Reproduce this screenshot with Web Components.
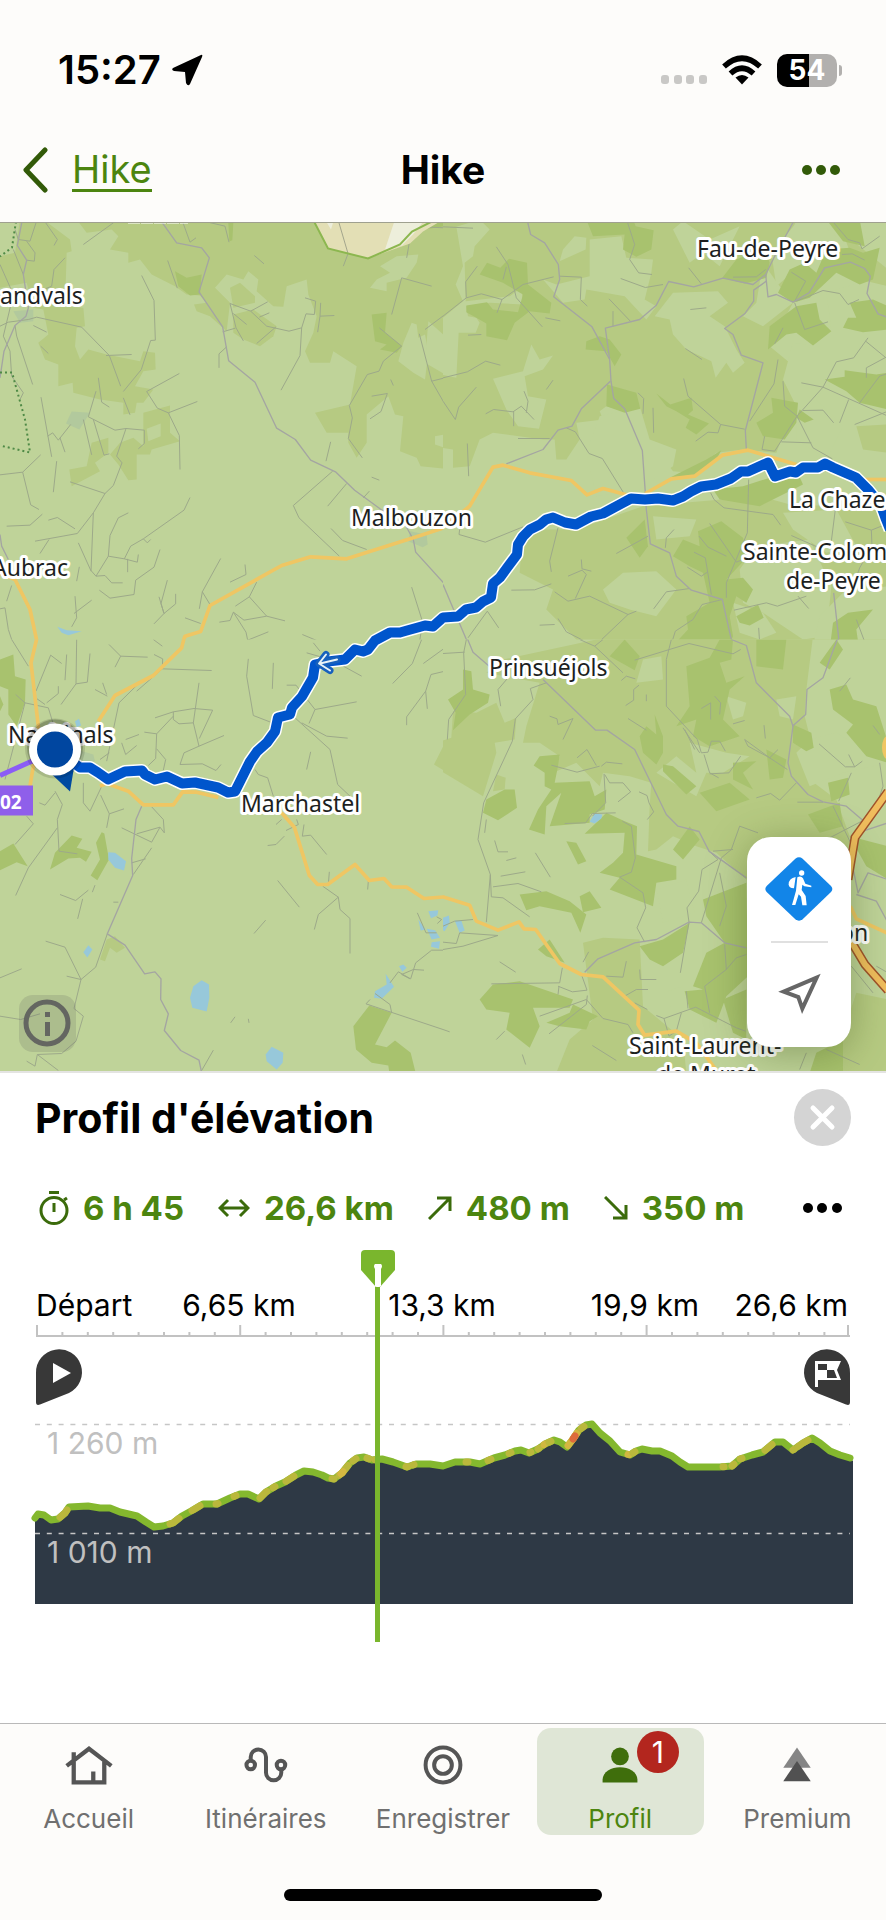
<!DOCTYPE html>
<html lang="fr">
<head>
<meta charset="utf-8">
<meta name="viewport" content="width=device-width, initial-scale=1">
<title>Hike</title>
<style>
  html, body { margin: 0; }
  body {
    min-height: 100vh;
    background: #fff;
    color: #000;
    font-family: Inter, "Liberation Sans", sans-serif;
    --bar: #fdfcfa;
    --line: #b9b9b9;
    --green: #4c850f;
    --dark-green: #3b6b0b;
    --cursor: #7ab62d;
  }
  hike-app { min-height: 100vh; }
</style>
</head>
<body>
<hike-app>
  <status-bar slot="top" time="15:27" battery="54"></status-bar>
  <nav-header slot="top" back="Hike">Hike</nav-header>
  <route-map>
    <map-tools></map-tools>
  </route-map>
  <elevation-panel slot="bottom">
    <span slot="title">Profil d'élévation</span>
    <stat-item icon="time">6 h 45</stat-item>
    <stat-item icon="distance">26,6 km</stat-item>
    <stat-item icon="up">480 m</stat-item>
    <stat-item icon="down">350 m</stat-item>
    <elevation-chart slot="chart" labels="Départ|6,65 km|13,3 km|19,9 km|26,6 km"></elevation-chart>
  </elevation-panel>
  <tab-bar slot="bottom">
    <tab-item icon="home">Accueil</tab-item>
    <tab-item icon="route">Itinéraires</tab-item>
    <tab-item icon="record">Enregistrer</tab-item>
    <tab-item icon="user" active badge="1">Profil</tab-item>
    <tab-item icon="tree">Premium</tab-item>
  </tab-bar>
</hike-app>

<script>
class HikeApp extends HTMLElement {
  connectedCallback() {
    this.attachShadow({ mode: 'open' }).innerHTML = `
      <style>
        :host { display: flex; flex-direction: column; }
        main { flex: 1; display: flex; flex-direction: column; min-height: 500px; }
      </style>
      <slot name="top"></slot>
      <main><slot></slot></main>
      <slot name="bottom"></slot>
    `;
  }
}
customElements.define('hike-app', HikeApp);

class StatusBar extends HTMLElement {
  connectedCallback() {
    const time = this.getAttribute('time');
    const battery = this.getAttribute('battery');
    this.attachShadow({ mode: 'open' }).innerHTML = `
      <style>
        :host {
          display: flex;
          justify-content: space-between;
          align-items: center;
          height: 116px;
          padding: 24px 44px 0 58px;
          box-sizing: border-box;
          background: var(--bar);
        }
        div { display: flex; align-items: center; }
        .time { font-size: 40px; font-weight: 600; line-height: 48px; gap: 11px; }
        .right { gap: 15px; }
        .battery {
          position: relative;
          justify-content: center;
          width: 60px;
          height: 33px;
          border-radius: 10px;
          margin-right: 5px;
          background: linear-gradient(90deg, #000 54%, #b2b0ae 54%);
          color: #fff;
          font-size: 28px;
          font-weight: 700;
        }
        .battery::after {
          content: "";
          position: absolute;
          right: -5px;
          top: 11px;
          width: 3px;
          height: 11px;
          border-radius: 0 3px 3px 0;
          background: #b2b0ae;
        }
      </style>
      <div class="time">${time}
        <svg width="31" height="32" viewBox="0 0 31 32"><path d="M29 1 1 14Q-1 16 2 17L13 18 14 29Q16 33 18 30L30 3Q31 0 29 1Z"/></svg>
      </div>
      <div class="right">
        <svg width="46" height="30" viewBox="0 0 46 30" fill="#c9c8c6">
          <rect y="20" width="8" height="9" rx="3"/><rect x="13" y="20" width="8" height="9" rx="3"/>
          <rect x="25" y="20" width="8" height="9" rx="3"/><rect x="38" y="20" width="8" height="9" rx="3"/>
        </svg>
        <svg width="40" height="30" viewBox="0 0 40 30" fill="none" stroke="#000" stroke-width="5.5">
          <path d="M2 11.500Q20-5 38 11.500M8.500 18.500Q20 8 31.500 18.500"/>
          <path d="M13.500 22.500Q20 17.500 26.500 22.500L20 29.500Z" fill="#000" stroke="none"/>
        </svg>
        <div class="battery">${battery}</div>
      </div>
    `;
  }
}
customElements.define('status-bar', StatusBar);

class NavHeader extends HTMLElement {
  connectedCallback() {
    this.attachShadow({ mode: 'open' }).innerHTML = `
      <style>
        :host {
          display: grid;
          grid-template-columns: 1fr auto 1fr;
          align-items: center;
          height: 107px;
          padding: 2px 44px 0 22px;
          box-sizing: border-box;
          background: var(--bar);
          border-bottom: 1px solid #9fa08f;
          line-height: 48px;
        }
        a {
          display: flex;
          align-items: center;
          gap: 24px;
          color: var(--green);
          font-size: 38px;
          text-decoration: none;
        }
        a span { border-bottom: 3px solid; line-height: 40px; }
        h1 { margin: 0; font-size: 39px; font-weight: 700; padding-left: 22px; }
        button { justify-self: end; padding: 0; border: 0; background: none; display: flex; }
      </style>
      <a href="#"><svg width="26" height="46" viewBox="0 0 26 46"><path d="M23 3 4 23 23 43" fill="none" stroke="#325a08" stroke-width="5" stroke-linecap="round" stroke-linejoin="round"/></svg><span>${this.getAttribute('back')}</span></a>
      <h1><slot></slot></h1>
      <button aria-label="Plus"><svg width="42" height="10" viewBox="0 0 42 10" fill="#325a08"><circle cx="7" cy="5" r="5"/><circle cx="21" cy="5" r="5"/><circle cx="35" cy="5" r="5"/></svg></button>
    `;
  }
}
customElements.define('nav-header', NavHeader);

// Map data. Every tile is 443px wide and holds its shapes at three units per pixel.
const TILES = [
  {
    x: 0, y: 220,
    meadow: [
      '0,110 45,100 60,0 130,0 210,60 215,95 200,100 195,260 250,265 255,320 230,325 225,380 240,420 265,390 320,405 420,425 430,395 465,400 467,450 430,455 405,500 460,510 430,550 410,550 405,580 370,585 370,550 300,540 220,520 218,490 175,500 175,435 135,420 115,370 145,345 130,270 100,265 80,190 0,205',
      '230,0 1335,0 1335,748 1262,740 1250,715 1200,695 1210,590 1185,585 1165,530 1100,585 1100,670 1070,715 1045,670 1045,640 980,640 945,580 1050,555 1070,440 1000,395 990,430 930,430 915,395 940,340 950,290 925,225 920,180 860,200 850,262 820,260 770,215 775,180 745,155 730,180 680,165 645,205 690,250 680,335 630,290 590,275 582,255 620,250 600,228 560,225 525,200 455,165 420,120 385,130 385,100 330,90 355,50 335,30 260,40',
      '690,205 720,190 765,230 765,250 700,265', '700,285 760,270 830,320 820,350 780,380 730,360 700,340',
      '430,580 510,558 510,640 540,665 455,690 450,705 410,705 410,780 385,782 355,735 330,705 360,670 400,655 430,680',
      '275,670 325,655 325,700 285,730 300,755 215,800 208,750 260,740'
    ],
    light: [
      '1140,140 1190,110 1255,105 1250,130 1220,175 1160,190 1160,215 1110,205 1130,180 1170,160',
      '1235,310 1250,315 1255,355 1275,345 1285,400 1275,480 1240,460 1195,425 1210,370',
      '1285,305 1335,350 1335,465 1275,430', '1305,650 1335,645 1335,685 1305,675', '440,628 482,612 482,650 445,665'
    ],
    forest: [
      '525,155 560,175 605,165 600,225 570,228 535,200', '1115,285 1160,280 1155,340 1205,380 1190,400 1140,390 1160,375 1125,365',
      '685,10 700,10 697,62 688,65', '1240,35 1290,0 1335,0 1335,20'
    ],
    village: ['40,275 100,270 100,305 60,310', '215,576 270,580 238,630 198,612', '1230,935 1280,945 1283,975 1268,983 1225,965'],
    water: ['172,1222 200,1232 245,1235 205,1247 185,1240'],
    road: [
      '480,0 530,70 605,85 628,115 597,217 668,322 686,424 765,488 830,626 886,660 932,722 1008,758 1064,812 1140,868 1215,915 1240,960 1247,998 1335,1095',
      '67,0 52,78 80,122 70,165 85,265 78,290 45,318 12,395 0,475', '0,945 5,980 25,1020'
    ],
    track: [
      '40,90 70,165', '108,10 90,65 55,60 45,30', '80,65 105,100 103,125 80,122', '135,7 172,60 162,78', '195,115 162,150 155,200 120,215', '0,135 40,225 10,350 30,395 35,470 70,520 60,540',
      '45,318 50,350 98,495', '0,320 25,308 85,300 110,293 245,323 328,408 362,500', '318,408 395,405', '425,168 462,243 466,362 452,363 424,450 370,516', '100,318 140,338', '340,10 250,75', '548,7 570,68 588,55', '620,7 675,20 687,68', '503,123 532,206', '763,108 792,133',
      '538,462 440,516 472,566 505,580 538,648 540,750', '505,580 592,546', '295,475 305,548 328,563', '288,515 265,592 345,632 378,627 433,632 433,672 415,688', '378,627 350,710 366,730 340,798 315,822 280,880 232,942 105,965', '210,787 315,822', '280,880 273,1055', '123,533 155,712', '143,650 158,640 175,662 212,615', '180,655 195,698', '250,600 275,706', '280,600 312,707 328,703', '370,535 390,586',
      '0,766 68,758 122,706', '68,758 92,856 117,870', '170,725 160,818', '20,920 90,917 127,884', '145,902 172,894 225,928', '120,1002 147,960', '385,880 355,895 330,948 325,1010 288,1070', '570,834 552,872 430,958 392,980 373,1018 325,1010', '430,958 442,970 452,960', '373,1018 412,1028 415,1005', '383,1018 383,1058', '235,970 272,1052 288,1070 315,1068 335,1090 368,1090', '480,990 462,1043 407,1082 402,1125 330,1136 298,1112', '225,1130 230,1195 215,1222', '222,1182 275,1142', '238,1042 230,1085', '20,1145 35,1098', '0,1168 15,1165 25,1230 45,1290', '502,1082 483,1152 492,1182 462,1213', '477,1132 492,1182 527,1153 527,1123', '662,1017 607,1117 598,1168', '607,1117 630,1155', '735,1035 738,1065 690,1088', '770,1088 748,1132 706,1160', '748,1132 800,1190 855,1204', '658,1208 690,1203 700,1178 732,1202 800,1190', '700,1178 738,1238 743,1262 805,1237', '555,1195 602,1212',
      '690,252 752,275 800,320 867,335 905,325 918,283 943,285 947,245 915,235', '690,252 708,325 730,364', '700,282 740,315', '752,275 803,247', '778,293 808,280', '770,372 828,322', '668,337 706,326', '905,325 900,408 843,512', '962,250 960,290 953,338', '960,290 1003,288', '657,445 657,403 680,382', '1012,7 1045,100 1030,140', '1240,0 1220,115', '1295,200 1205,175 1175,285', '1138,325 1205,380 1150,425 1137,455 1102,465 1048,558 1057,595 1045,657 1087,715', '1258,343 1295,485 1335,555', '1275,330 1335,285', '1335,475 1295,485', '1115,530 1162,522 1143,576 1110,598', '1172,480 1180,498', '992,667 978,725', '998,755 880,858 897,895 1018,1010', '1040,792 983,860', '1108,815 1090,835', '1115,773 1138,782', '993,927 1028,963 1100,990', '1235,1103 1268,1208 1255,1290', '907,1245 955,1265 957,1290', '1220,20 1335,25', '122,380 145,402'
    ],
    yellow: ['1335,924 1240,955 1040,1018 932,1012 845,1038 630,1158 602,1236 555,1250 540,1292', '0,1062 45,1080 90,1170 110,1262 98,1310']
  },
  {
    x: 443, y: 220,
    meadow: [
      '-6,-6 1060,0 1040,60 1050,250 980,380 1040,430 1060,540 1000,700 900,690 820,700 740,760 690,755 640,690 600,650 560,580 490,560 470,575 480,600 400,610 410,660 370,720 340,720 335,660 300,660 150,640 110,660 80,740 30,745 30,690 -6,685',
      '235,990 260,930 400,930 600,860 950,830 1060,860 1335,850 1335,1300 440,1300 310,1170 330,1110 230,1060',
      '1240,620 1335,615 1335,700 1260,690', '1200,40 1335,150 1335,200 1250,180'
    ],
    light: [
      '40,22 110,0 140,30 95,80 90,110 65,130 68,245 200,230 235,205 240,255 140,250 70,260 75,290 100,295 110,310 98,340 47,340 40,475 -6,465 -6,350 0,295 60,245 38,195 60,140',
      '360,90 395,50 430,55 428,90 350,125', '440,60 535,50 550,115 630,120 625,160 605,240 640,260 610,300 545,230 430,210 425,240 360,250 300,180 340,195 440,170',
      '690,30 720,5 800,60 890,20 850,100 830,140 780,100 740,130 720,90', '690,220 825,215 855,250 800,290 845,320 880,390 905,430 870,460 850,430 818,475 805,425 730,390 690,345 680,300 635,290',
      '150,478 240,455 265,375 290,420 330,408 300,450 245,470 255,530 310,540 288,628 225,620 190,570',
      '960,130 1010,200 1050,250 960,320 900,290 940,250', '1060,10 1120,0 1190,60 1100,120 1060,150 1000,200 985,100', '1260,0 1335,0 1335,50 1270,60',
      '1150,220 1250,190 1335,200 1335,450 1180,450 1120,540 1200,620 1150,720 1060,660 1060,560 1020,480 1050,370 1110,378 1165,330',
      '480,1110 540,1060 640,1055 700,1110 640,1190 560,1170 500,1150', '890,1050 940,980 1100,960 1165,1100 1150,1250 1080,1260 960,1180 900,1150', '630,890 760,900 740,950 640,960', '870,1150 960,1180 1000,1240 950,1260 890,1240', '1020,880 1180,870 1240,980 1150,1000 1050,930', '470,590 590,560 620,660 700,690 690,740 590,810 460,830 430,700',
      '1105,1300 1130,1190 1200,1120 1335,1100 1335,1300'
    ],
    forest: [
      '430,0 570,0 578,20 632,32 625,90 580,112 540,90 545,45 450,50', '110,165 132,130 172,145 198,118 252,130 255,195 325,250 320,282 260,275 215,310 192,362 130,350 130,312 100,295 70,278 70,258 132,248 150,270 225,278 240,225 180,190',
      '428,390 430,365 470,350 500,360 535,405 515,440 490,395', '492,495 580,520 592,568 545,580 490,560', '640,522 682,555 745,535 750,572 735,585 798,612 760,645 728,625 740,600 700,575 670,560',
      '838,175 880,120 965,85 980,130 970,175 905,192', '1005,220 1040,150 1085,130 1120,160 1150,90 1220,85 1260,100 1310,85 1290,180 1250,195 1180,160 1100,235 1050,250', '975,390 980,320 1060,260 1120,250 1130,300 1165,335 1110,378 1060,340 1030,345',
      '1200,325 1215,295 1240,295 1220,250 1290,240 1335,260 1335,330 1260,338', '940,610 990,580 985,535 1065,550 1060,610 1025,660 960,650', '1145,480 1205,472 1205,452 1300,465 1335,460 1335,570 1250,550 1210,515', '1070,570 1112,600 1085,610 1060,595',
      '1150,0 1250,0 1265,80 1200,65', '680,775 790,720 835,692 820,720 760,765', '810,810 900,800 1060,750 1080,795 950,860 830,840', '765,935 835,905 900,955 915,1010 850,1080 900,1075 930,1110 910,1150 880,1130 860,1190 870,1250 850,1300 670,1300 735,1230 730,1190 800,1150 780,1060 740,1040 690,1010 720,960 770,980', '550,955 605,900 615,980 590,1015', '880,1190 945,1155 962,1195 920,1218 890,1210', '1160,1290 1170,1210 1215,1180 1290,1170 1240,1230 1250,1300'
    ],
    road: [
      '252,0 263,45 305,70 346,135 350,180 332,232 447,322 500,420 504,485 512,536 545,568 598,693 607,820 610,870 622,973 680,1000 700,1070 745,1112 838,1140 866,1265 910,1278 915,1300',
      '502,485 415,568 387,620 345,632 300,690 190,733', '500,420 487,326 590,300 640,257 677,186 752,202 840,176 930,195 968,165 1000,100 1055,0', '968,165 975,232 1000,225 1050,248 1098,220 1145,145 1222,128 1265,147 1282,170 1272,222 1305,283 1335,294', '970,185 932,212 932,245 905,283 845,327 870,345 895,407 960,430 907,633 910,690', '0,1095 85,1295', '1172,1120 1187,1255 1180,1300'
    ],
    track: [
      '0,22 90,26', '160,82 195,135 220,235 298,322', '103,140 68,187 70,235 0,290', '70,235 115,223 177,240 240,195 332,172', '190,142 180,180', '177,240 162,280', '350,170 415,173 412,240 433,260', '553,7 575,75 560,120 587,160 627,165', '533,177 607,204 660,195', '498,238 562,305', '510,275 510,320', '307,295 352,304', '75,347 115,345', '0,475 73,457 128,425 172,437', '100,503 47,563 37,600 0,545', '330,482 310,510', '128,583 152,570 210,577 235,560 273,600', '243,515 255,545 250,580', '212,577 212,620', '225,657 320,657', '73,672 77,770', '370,625 397,637 438,702 478,717 545,825', '585,520 602,537 600,583', '630,565 632,640', '722,477 735,530 833,615 905,629', '833,615 825,640 795,638 758,665', '727,387 777,420', '737,145 775,193', '742,270 790,265', '870,173 940,172 968,150', '1005,420 993,493 920,605', '1020,485 1025,560 1062,590 1110,685 1168,718', '1062,590 1140,503 1180,427 1232,415 1275,355', '1062,590 995,695 957,690 965,650', '1075,490 1140,503 1335,590', '1080,573 1140,572 1172,610', '1015,667 1105,670', '1217,540 1190,610', '1235,615 1335,575', '1268,365 1335,420', '1270,475 1270,445 1335,410', '1250,550 1310,470 1335,462', '1055,250 1085,330 1155,307', '1060,245 1140,213 1190,222 1215,255 1248,240', '1020,325 995,373', '1045,158 1088,185 1055,245', '1170,7 1215,60 1250,70 1257,88 1310,50', '1197,105 1228,103 1265,122',
      '50,930 48,945 127,968 240,922', '345,925 320,1025 325,1057', '415,1020 417,1048 445,1055', '375,1070 417,1052 430,1065 397,1137', '335,1117 375,1145 440,1130 555,1185 455,1280', '205,1112 275,1111 325,1093', '555,1185 580,1175', '290,1217 335,1215', '345,1197 370,1237 455,1280', '133,1175 75,1255', '133,1175 167,1225', '615,950 520,1002', '693,930 670,955 667,985', '803,820 813,840 843,865 990,885 1013,917', '917,780 913,940 850,1090 850,1135', '800,912 880,1028 900,1020', '768,950 795,983 850,1010', '753,998 787,1015 805,1125', '733,1043 775,1070 793,1058', '740,1107 670,1117 632,1168', '873,1172 970,1150 1003,1160 1090,1130', '1065,1130 1097,1167', '838,1140 777,1155 750,1200 697,1235 680,1290', '1177,870 1165,965', '1207,907 1285,932 1320,918', '1285,932 1287,980 1250,1045 1220,1130', '1045,948 1140,990', '947,1225 950,1270', '1240,1200 1270,1280', '660,1290 740,1272 880,1300'
    ],
    yellow: ['0,924 80,860 150,743 180,737 260,760 385,783 432,826 480,807 550,826', '607,822 685,778 755,770 838,707 915,692 1060,735', '1250,780 1335,780']
  },
  {
    x: 0, y: 640,
    meadow: ['1335,310 1302,375 1335,395', '300,960 320,900 345,890 375,925 350,940 330,925 315,965'],
    forest: [
      '0,60 40,45 45,110 77,120 75,190 50,260 25,225 25,150 0,140', '0,170 10,195 0,215', '0,635 40,612 83,680 50,668 0,692', '150,690 165,640 215,588 247,598 230,625 275,637 258,667 240,655 205,657', '305,578 313,582 327,660 292,722 272,708 300,660 288,610',
      '1108,1098 1175,1120 1125,1215 1160,1223 1185,1203 1232,1240 1247,1300 1168,1300 1165,1278 1115,1270 1068,1230 1060,1160'
    ],
    village: ['230,330 280,345 285,365 245,370'],
    water: [
      '325,638 345,640 378,665 372,693 345,685 325,660', '265,917 277,930 262,954 250,938', '605,1022 627,1035 628,1075 620,1116 577,1105 570,1075 580,1040', '815,1222 850,1240 848,1270 830,1290 800,1265 797,1245', '225,245 237,238 243,258 230,263',
      '1125,1055 1160,1035 1157,1003 1182,1042 1145,1078 1122,1075', '1197,980 1210,975 1220,985 1207,997', '1285,815 1315,812 1312,828 1293,836', '1255,840 1277,870 1262,873', '1280,868 1305,872 1320,895 1295,900', '1295,908 1320,905 1317,928 1293,922'
    ],
    road: ['425,500 408,540 395,657 398,708 322,883 375,917 434,1003 465,997 483,1018 482,1080 505,1123 493,1173 542,1233 597,1262 605,1300'],
    track: [
      '35,0 85,80', '230,0 228,133 183,195', '270,42 262,128 228,133', '152,47 108,155', '152,47 185,72', '200,45 195,122', '327,15 362,50 443,53', '362,50 345,83', '460,0 487,20', '462,45 488,58 487,88 410,155', '487,88 635,93', '285,150 322,170', '320,165 308,130', '47,165 75,190 145,205 200,385', '140,190 175,162 175,140', '75,190 15,420', '107,175 135,195', '415,133 357,190 320,365', '465,235 520,217 582,207 638,212 598,297', '597,130 580,250 597,320 672,288', '520,217 520,240 537,253 580,250', '597,320 552,340 540,375 607,373 648,393 663,375', '433,278 470,283 467,357 445,378', '470,283 520,230', '470,328 497,360 490,392', '365,310 377,345 410,318', '377,300 417,285', '328,340 300,360', '820,70 817,148', '745,58 740,110 760,228 830,255', '860,137 888,137 945,210 1070,187', '945,210 927,252', '885,235 990,330 1013,435 1050,470', '905,250 980,290 1043,296', '932,337 920,390', '1030,80 1085,110', '920,40 962,52', '940,10 960,35', '1265,0 1237,72 1178,132', '1335,25 1270,72', '1335,95 1293,105 1277,155 1220,232 1220,257', '1277,155 1282,208', '765,390 775,405 803,415 820,470',
      '250,430 250,490 270,515 310,430', '302,467 328,523 372,508', '328,523 320,565', '165,455 187,495 172,540 177,635 232,643', '172,565 85,685 47,768', '80,530 100,553 45,615', '118,490 135,497 165,460', '455,502 490,540 493,580 480,563 455,608 365,565', '410,583 480,563', '455,625 400,705', '395,670 437,658', '322,883 287,983 243,1020 222,1107 250,1130 228,1205 185,1242 112,1245 175,1293', '243,1020 195,923 137,905', '243,1020 200,1010', '0,1015 65,988', '0,1130 62,1140 120,1123', '80,1265 105,1280 112,1245', '180,765 227,783 265,752', '248,778 233,838', '285,737 277,758', '340,788 355,788', '833,723 898,803', '797,842 762,882', '968,740 1015,773 955,825 943,870', '1015,773 1020,810 1050,837 1050,942', '988,697 985,735', '1105,725 1103,750', '803,618 828,615 853,590', '890,540 895,555 858,573', '912,555 907,590 932,587 980,645', '828,555 845,540', '1252,820 1278,880 1310,880', '1335,932 1295,932 1247,970 1232,1018 1195,997 1170,1030', '1230,1018 1205,1005 1240,990 1272,992', '1110,1080 1098,1093 1335,1172', '1125,1062 1170,1095 1175,1120', '705,1132 692,1150', '745,1138 747,1150', '640,1232 605,1293', '1310,832 1325,840 1312,852'
    ],
    yellow: ['112,-10 93,70 115,260 100,380 90,440', '555,-15 545,25 460,108 345,168 295,245', '300,440 320,432 385,455 430,496 520,496 548,457 590,458 655,474', '845,520 883,563 928,708 953,735 983,735 1065,675 1108,723 1152,717 1175,742 1220,743 1272,777 1335,772']
  },
  {
    x: 443, y: 640,
    meadow: [
      '-5,395 -5,305 25,295 30,215 100,220 160,190 185,250 220,235 215,300 155,310 160,340 120,470',
      '290,130 130,100 180,60 460,0 560,-10 1110,-10 1090,150 1085,230 1110,330 1100,420 1180,480 1220,590 1200,760 910,720 820,640 760,620 690,590 640,630 615,635 620,500 625,430 560,410 480,400 470,440 400,370 330,400 350,350 290,310 240,310 250,260',
      '160,405 188,415 185,450 150,455',
      '420,910 480,895 590,900 600,1100 720,1200 730,1300 340,1300 380,1200 450,1140', '1240,1060 1335,1080 1335,1300 1160,1300'
    ],
    light: [
      '600,60 655,50 660,120 580,130', '640,400 700,350 760,400 740,310 850,340 920,350 840,400 790,400 760,470 690,430', '1000,180 1060,170 1050,240 1010,230', '850,170 910,190 900,230 870,240', '1100,300 1180,280 1335,370 1200,400 1100,440 1060,340', '640,750 730,720 755,820 660,850', '660,1060 720,1040 780,1100 700,1130'
    ],
    forest: [
      '60,90 85,95 90,150 140,165 135,190 80,225 30,272 38,220 15,180 60,150', '185,450 215,450 222,505 165,542 120,520 130,480', '325,450 305,440 305,400 272,378 290,350 350,345 345,380 335,430 440,425 455,470 490,450 485,510 440,525 440,550 320,560 355,460 310,500 305,585 258,570 285,510',
      '490,520 545,545 582,560 580,645 700,680 700,720 640,730 630,800 500,750 530,715 470,700 510,670 540,640 545,580 425,583 470,540', '370,605 400,610 430,665 405,675', '230,765 310,755 380,785 430,825 412,880 385,820 290,800 250,812', '410,770 440,755 475,805 420,818', '110,1080 150,1035 230,1025 390,1080 380,1105 270,1105 290,1160 260,1225 190,1170 200,1120 130,1110', '310,1150 380,1120 390,1095 465,1130 440,1145 430,1170 350,1160', '285,930 320,900 365,970 310,950',
      '500,50 545,0 590,50 575,92', '730,80 800,55 830,0 870,0 865,60 830,70 850,130 905,110 860,150 840,240 890,290 800,320 750,290 760,240 700,260 740,200', '590,290 610,260 640,285 635,225 660,290 660,340 640,375 600,340', '660,375 690,380 760,440 730,465 660,395', '770,460 860,430 920,480 820,515', '690,630 740,560 770,600 720,660', '780,780 910,730 915,1010 850,1070 820,1150 740,1110 725,1055 780,1050 750,1040 790,940 845,910 790,830',
      '1160,150 1210,135 1230,180 1300,200 1335,310 1335,370 1270,350 1210,280 1230,255 1170,210', '1050,255 1105,280 1112,325 1090,335 1050,310', '1155,430 1215,415 1220,465 1165,485', '1095,525 1190,490 1200,560 1130,580', '970,330 1030,360 1020,415 980,420', '870,370 940,365 900,400 930,450 870,420', '940,0 1030,0 1020,90 940,80', '1130,70 1180,0 1200,30 1160,90', '1220,590 1335,620 1335,720 1270,680', '1120,1240 1200,1200 1200,1300 1100,1300', '590,920 660,900 740,850 720,940 660,980 620,960', '840,1080 910,1050 910,1200 870,1180'
    ],
    water: ['455,522 478,525 475,537 455,552 440,547', '35,843 55,843 65,873 50,880', '0,835 18,828 20,850 5,875 -5,870'],
    road: [
      '70,-10 90,38 150,90', '300,120 458,272 492,272 575,330 670,525 705,560 768,576 798,635 910,715', '425,998 465,958 575,910 640,900 738,848 775,850 845,910 910,925', '865,0 910,18 940,130 1040,230 1050,260 1035,370 1045,410 1095,465 1140,487 1210,500 1260,543', '1190,-20 1140,115 1092,150 1088,225 1048,260', '1225,660 1245,760 1275,700 1335,720', '1240,765 1300,785 1335,850', '1260,575 1335,550'
    ],
    track: [
      '0,42 65,38', '70,0 62,40 68,165 17,240 13,300', '195,115 165,150 173,200', '310,130 262,147 270,180 217,238 208,305 122,490 105,600 142,705 130,848', '410,0 455,20 540,100', '455,20 480,0', '575,62 738,12 870,43 893,30', '685,0 670,60 670,200 763,300 775,340 795,338 805,305 830,305 847,335', '535,123 550,110 577,118', '548,198 572,182 572,150 588,137', '610,165 610,185', '555,237 610,272', '320,230 342,238 345,255 390,237 360,300', '402,355 432,330 460,378', '325,377 402,398 470,380', '475,380 490,368 538,373', '483,403 488,490 448,530', '485,405 500,430 540,430 563,457 525,487', '588,457 612,468 618,490 632,517 613,540', '518,520 448,522 428,550 365,552', '538,545 565,560 577,655 565,698 530,713 600,760 608,805 582,865 605,908', '155,603 165,637 195,637', '190,663 220,655', '173,710 247,697', '277,640 322,713', '150,742 225,732 295,757', '142,705 145,772 180,775 260,832', '170,967 218,998', '145,1033 350,1030 358,985', '345,1040 388,1057 432,1052 417,1010', '345,1065 348,1040', '433,1068 430,1095 318,1183', '290,1130 430,1080 480,1137 555,1155 570,1180', '437,937 420,968', '550,965 540,1013 490,1010', '590,990 592,1020 640,1020', '545,1070 580,1050 615,1050', '575,1090 613,1110', '640,1128 663,1137 758,1103 880,1165 908,1175', '715,1120 700,1175 678,1190 663,1137', '735,1107 730,1055', '185,1175 160,1200', '238,1245 248,1275', '448,1218 520,1263', '0,1170 20,1177', '0,908 40,912 50,880 165,888 60,920 0,930', '0,860 35,845 90,840', '738,848 712,1000', '845,915 850,990 785,1040 800,1120', '850,990 880,955 910,945', '775,850 835,655 865,630 890,560 945,580', '798,635 825,660 777,690 767,755 732,805 738,848', '830,700 850,800 830,860', '783,345 800,400 827,415', '800,403 858,400 893,350', '803,240 803,190 775,207', '815,170 833,190 830,225', '870,253 905,243', '963,257 967,297', '905,300 980,355 1033,390', '905,300 915,320 980,355 1005,330', '940,475 983,462 1010,482 1060,430', '1063,488 1140,488', '1128,313 1207,382 1235,382 1217,345', '1235,382 1258,365', '1225,400 1187,485', '1290,258 1310,285', '1222,115 1190,155', '1170,500 1230,625', '1260,543 1160,595', '1310,370 1320,440 1300,500', '1225,980 1290,1060', '1300,980 1335,1000', '1150,1230 1250,1275', '1090,1240 1070,1290', '130,540 125,580', '725,270 755,330', '720,265 770,340', '810,635 870,630'
    ],
    yellow: ['-3,771 80,797 100,845 165,872 228,847 243,868 278,870 350,972 415,1005 480,1012 588,1112 585,1155 605,1187 700,1175 760,1210 825,1300', '1222,800 1240,838 1335,882']
  }
];

const ROUTE = '890,530 886,520 881,506 868,490 856,478 833,468 825,464 818,468 803,468 796,473 790,472 775,477 768,463 748,472 741,472 731,479 716,485 701,487 691,492 683,497 673,501 658,499 645,500 631,499 603,514 591,517 576,525 565,523 553,518 546,520 540,525 530,530 523,537 518,545 517,555 508,567 500,578 493,584 491,598 483,602 476,608 466,610 458,617 443,618 433,627 425,626 407,631 400,633 390,633 375,641 368,650 363,652 355,650 345,660 328,662 315,665 313,678 302,697 292,708 290,715 278,718 275,732 267,743 257,752 250,762 235,792 228,793 218,788 195,783 182,784 167,777 155,780 145,775 142,771 125,772 108,780 98,773 90,768 80,768 55,750';

const PLACES = [
  ['andvals', 0, 304], ['Aubrac', -8, 576], ['Malbouzon', 351, 526], ['Fau-de-Peyre', 697, 257],
  ['La Chaze', 789, 508], ['Sainte-Colom', 743, 560], ['de-Peyre', 786, 589], ['Prinsuéjols', 489, 676],
  ['Nasbinals', 8, 743], ['Marchastel', 241, 812], ['Saint-Laurent-', 629, 1054], ['de Muret', 657, 1083], ['on', 840, 941]
];

class RouteMap extends HTMLElement {
  tile(t) {
    const fill = (list, color) => (list || []).map(p => `<polygon points="${p}" fill="${color}"/>`).join('');
    const line = (list, color, width) => (list || []).map(p => `<polyline points="${p}" stroke="${color}" stroke-width="${width}" fill="none"/>`).join('');
    return `<svg x="${t.x}" y="${t.y}" width="443" height="${t.y === 220 ? 420 : 440}" viewBox="0 0 1329 ${t.y === 220 ? 1260 : 1320}">
      ${fill(t.meadow, '#b6ca82')}${fill(t.light, '#bfd399')}${fill(t.forest, '#a8c26e')}
      ${fill(t.village, '#b2c99d')}${fill(t.water, '#97c8da')}
      ${line(t.track, '#9da98a', 3)}${line(t.road, '#a4a5a2', 4)}${line(t.yellow, '#efc663', 11)}
    </svg>`;
  }

  connectedCallback() {
    const places = PLACES.map(([name, x, y]) => `<text x="${x}" y="${y}">${name}</text>`).join('');
    this.attachShadow({ mode: 'open' }).innerHTML = `
      <style>
        :host {
          display: block;
          position: relative;
          flex: 1;
          overflow: hidden;
          background: #bfd399;
        }
        .map { position: absolute; inset: 0; width: 100%; height: 100%; }
        .map polyline { stroke-linejoin: round; }
        .places text {
          font: 23px "Noto Sans", sans-serif;
          fill: #1d1f1f;
          stroke: #fff;
          stroke-width: 6px;
          stroke-linejoin: round;
          paint-order: stroke;
        }
        .info {
          position: absolute;
          left: 19px;
          bottom: 19px;
          width: 57px;
          height: 57px;
          padding: 0;
          border: 0;
          border-radius: 14px;
          background: rgba(90, 90, 90, .18);
        }
        ::slotted(map-tools) { position: absolute; right: 35px; bottom: 24px; }
      </style>
      <svg class="map" viewBox="0 223 886 849" preserveAspectRatio="xMidYMid slice">
        ${TILES.map(t => this.tile(t)).join('')}
        <path d="M313 220 328 249 368 259 410 244 423 232 440 222Z" fill="#e3dfb5"/>
        <path d="M395 220H425L413 235 402 246 385 250ZM325 220H334L331 230Z" fill="#edeedb"/>
        <path d="M338 220 348 254" stroke="#a3a58c" fill="none"/>
        <path d="M313 220 328 249 368 259 400 245 412 232 432 222" fill="none" stroke="#8cb74f" stroke-width="2"/>
        <path d="M16 222 12 248 0 257M0 373H12L25 420 30 453 0 446" fill="none" stroke="#4f8a46" stroke-width="2" stroke-dasharray="2 3"/>
        <path d="M128 223H188" stroke="#fff" stroke-width="2" stroke-dasharray="12 1"/>
        <path d="M888 792 855 838 848 880M850 940 865 965 888 991" fill="none" stroke="#a0522a" stroke-width="9"/>
        <path d="M888 792 855 838 848 880M850 940 865 965 888 991" fill="none" stroke="#f0bd5d" stroke-width="6"/>
        <ellipse cx="888" cy="748" rx="6" ry="12" fill="#efc663"/>
        <path d="M0 776 40 758" stroke="#8b5cf6" stroke-width="5"/>
        <rect x="-2" y="786" width="35" height="30" fill="#8f5fea"/>
        <text x="0" y="809" font-family="Noto Sans, sans-serif" font-size="19" font-weight="700" fill="#fff">02</text>
        <polyline points="${ROUTE}" fill="none" stroke="#fff" stroke-width="13"/>
        <polyline points="${ROUTE}" fill="none" stroke="#0055cc" stroke-width="10"/>
        <g fill="none" stroke-linecap="round" stroke-linejoin="round">
          <path d="M337 660 320 664M326 655 319 664 330 671" stroke="#1761bd" stroke-width="7"/>
          <path d="M337 660 320 664M326 655 319 664 330 671" stroke="#e9f3f7" stroke-width="2"/>
        </g>
        <g class="places">${places}</g>
        <path d="M52 775 70 792 74 768Z" fill="#004aa0"/>
        <circle cx="55" cy="749" r="30" fill="#000" opacity=".12"/>
        <circle cx="55" cy="748" r="28" fill="#000" opacity=".2"/>
        <circle cx="55" cy="750" r="22" fill="#0046a0" stroke="#fff" stroke-width="8"/>
      </svg>
      <button class="info" aria-label="Informations">
        <svg width="57" height="57" viewBox="0 0 57 57"><circle cx="28" cy="28" r="21" fill="none" stroke="#646661" stroke-width="5"/><path d="M26 17h5v5h-5zM26 27h5v14h-5z" fill="#646661"/></svg>
      </button>
      <slot></slot>
    `;
  }
}
customElements.define('route-map', RouteMap);

class MapTools extends HTMLElement {
  connectedCallback() {
    this.attachShadow({ mode: 'open' }).innerHTML = `
      <style>
        :host {
          display: flex;
          flex-direction: column;
          align-items: center;
          width: 104px;
          height: 210px;
          border-radius: 24px;
          background: #fff;
          box-shadow: 0 6px 40px rgba(60, 80, 20, .4);
        }
        button { flex: 1; width: 100%; padding: 0; border: 0; background: none; display: grid; place-items: center; }
        hr { width: 57px; height: 2px; margin: 0; border: 0; background: #e0e0e0; }
      </style>
      <button aria-label="Activité">
        <svg width="68" height="64" viewBox="966 651 202 192">
          <path d="M1056 656Q1067 648 1078 656L1163 738Q1171 747 1163 756L1078 838Q1067 846 1056 838L970 756Q962 747 970 738Z" fill="#1285e8"/>
          <g fill="#fff"><circle cx="1075" cy="699" r="8"/><path d="M1057 711 1052 745Q1036 745 1036 733 1036 715 1057 711Z"/>
          <path d="M1062 712Q1073 706 1079 715L1086 731 1104 737V742L1083 739 1077 734 1075 750 1087 768 1090 796H1077L1073 770 1066 763 1056 795H1046L1058 752Z"/></g>
        </svg>
      </button>
      <hr>
      <button aria-label="Ma position">
        <svg width="44" height="44" viewBox="1000 1001 132 132"><path d="M1119 1015 1020 1057 1064 1073 1076 1108Z" fill="none" stroke="#666" stroke-width="12"/></svg>
      </button>
    `;
  }
}
customElements.define('map-tools', MapTools);

class ElevationPanel extends HTMLElement {
  connectedCallback() {
    this.attachShadow({ mode: 'open' }).innerHTML = `
      <style>
        :host {
          display: block;
          padding: 16px 35px 119px;
          border-top: 2px solid #e4e4e2;
          background: #fff;
        }
        header, .stats { display: flex; justify-content: space-between; align-items: center; }
        h2 { margin: 0; font-size: 41px; line-height: 56px; font-weight: 700; }
        button { padding: 0; border: 0; background: none; display: flex; }
        .close { border-radius: 50%; background: #d4d4d4; }
        .stats { height: 40px; margin: 42px 9px 22px 4px; gap: 34px; justify-content: flex-start; }
        .stats button { margin-left: auto; }
      </style>
      <header>
        <h2><slot name="title"></slot></h2>
        <button class="close" aria-label="Fermer"><svg width="57" height="57" viewBox="0 0 57 57"><path d="M19 19 38 38M38 19 19 38" stroke="#fff" stroke-width="5" stroke-linecap="round"/></svg></button>
      </header>
      <div class="stats">
        <slot></slot>
        <button aria-label="Plus"><svg width="39" height="10" viewBox="0 0 39 10"><circle cx="5" cy="5" r="5"/><circle cx="19" cy="5" r="5"/><circle cx="34" cy="5" r="5"/></svg></button>
      </div>
      <slot name="chart"></slot>
    `;
  }
}
customElements.define('elevation-panel', ElevationPanel);

const STAT_ICONS = {
  time: '<svg width="30" height="34" viewBox="0 0 30 34"><circle cx="15" cy="19.500" r="13"/><path d="M10 1.500H20M15 12V21M25 9 28 7"/></svg>',
  distance: '<svg width="32" height="20" viewBox="0 0 32 20"><path d="M2 10H30M10 2 2 10 10 18M22 2 30 10 22 18"/></svg>',
  up: '<svg width="24" height="24" viewBox="0 0 24 24"><path d="M1 23 21 3M9 2H22V15"/></svg>',
  down: '<svg width="24" height="24" viewBox="0 0 24 24"><path d="M1 1 21 21M9 22H22V9"/></svg>'
};

class StatItem extends HTMLElement {
  connectedCallback() {
    this.attachShadow({ mode: 'open' }).innerHTML = `
      <style>
        :host {
          display: flex;
          align-items: center;
          gap: 14px;
          color: var(--green);
          font-size: 33px;
          font-weight: 700;
          white-space: nowrap;
        }
        svg { fill: none; stroke: var(--dark-green); stroke-width: 3; }
      </style>
      ${STAT_ICONS[this.getAttribute('icon')]}<slot></slot>
    `;
  }
}
customElements.define('stat-item', StatItem);

const PROFILE = [
  [35,129],[38,125],[44,126],[51,131],[58,130],[65,124],[69,118],[88,117],[100,119],[110,119],[120,123],[137,127],[146,133],[154,138],[163,137],[173,134],[182,127],[193,121],[203,115],[217,115],[230,109],[240,105],[248,105],[259,110],[266,103],[276,97],[285,93],[296,86],[304,82],[313,83],[322,86],[328,89],[334,90],[342,84],[350,74],[357,69],[364,68],[372,71],[382,70],[393,73],[407,78],[416,75],[430,75],[443,77],[455,73],[470,73],[480,75],[487,72],[494,69],[505,66],[515,62],[521,61],[529,64],[538,60],[545,55],[554,51],[560,53],[567,58],[573,50],[579,41],[586,36],[592,35],[600,44],[610,52],[620,63],[630,66],[636,62],[642,60],[652,62],[660,62],[672,67],[680,73],[688,78],[705,78],[720,78],[732,77],[740,70],[752,66],[763,63],[775,53],[783,53],[793,61],[803,54],[812,49],[820,54],[830,62],[840,66],[850,69]
];

// [from, to, color] stretches that are steeper than the rest
const STEEP = [
  [60,67,'#bab83c'],[170,179,'#bab83c'],[192,200,'#bab83c'],[216,218,'#bab83c'],[234,236,'#bab83c'],[260,267,'#bab83c'],[273,275,'#bab83c'],[286,294,'#bab83c'],
  [332,334,'#bab83c'],[339,348,'#bab83c'],[341,343,'#d5b841'],[353,356,'#bab83c'],[367,369,'#bab83c'],[375,376,'#bab83c'],[406,408,'#bab83c'],[413,414,'#bab83c'],[466,468,'#bab83c'],[488,491,'#bab83c'],
  [509,511,'#bab83c'],[530,531,'#bab83c'],[538,539,'#bab83c'],[544,545,'#d0b840'],[549,551,'#bab83c'],[568,577,'#d4b741'],[573,575,'#de6b3c'],[581,584,'#bab83c'],[628,629,'#d0b840'],[633,635,'#bab83c'],
  [723,724,'#bab83c'],[732,734,'#bab83c'],[740,742,'#bab83c'],[765,772,'#bab83c'],[793,794,'#bab83c'],[798,808,'#bab83c']
];

function profileAt(x) {
  const i = PROFILE.findIndex(p => p[0] >= x);
  if (i < 1) return PROFILE[0][1];
  const [x0, y0] = PROFILE[i - 1];
  const [x1, y1] = PROFILE[i];
  return y0 + (y1 - y0) * (x - x0) / (x1 - x0);
}

function stretch(from, to) {
  return [[from, profileAt(from)], ...PROFILE.filter(p => p[0] > from && p[0] < to), [to, profileAt(to)]].join(' ');
}

class ElevationChart extends HTMLElement {
  connectedCallback() {
    const labels = this.getAttribute('labels').split('|').map(l => `<span>${l}</span>`).join('');
    let ticks = '';
    for (let i = 0; i <= 32; i++) {
      const x = Math.min(37 + i * 25.4, 848);
      ticks += `M${x} ${i % 8 ? 8 : 1}V12`;
    }
    this.attachShadow({ mode: 'open' }).innerHTML = `
      <style>
        :host { display: block; position: relative; padding-top: 36px; }
        .labels {
          display: grid;
          grid-template-columns: minmax(0, 1fr) repeat(3, minmax(0, 2fr)) minmax(0, 1fr);
          font-size: 30px;
          line-height: 38px;
          white-space: nowrap;
          margin: 0 3px 0 1px;
        }
        span { justify-self: center; }
        span:first-child { justify-self: start; }
        span:last-child { justify-self: end; }
        svg { display: block; overflow: visible; }
        .ruler, .profile { width: 100%; height: auto; }
        .pins { display: flex; justify-content: space-between; padding: 0 1px; margin: 12px 0 4px; }
        .profile text { font-size: 30px; fill: #c0c0c0; }
        .cursor {
          position: absolute;
          top: 0;
          bottom: -38px;
          left: 42%;
          width: 34px;
          margin-left: -17px;
          display: flex;
          flex-direction: column;
          align-items: center;
        }
        .cursor::after { content: ""; flex: 1; width: 5px; background: var(--cursor); }
      </style>
      <div class="labels">${labels}</div>
      <svg class="ruler" viewBox="35 0 816 14"><path d="${ticks}" stroke="#c2c2c2" stroke-width="2"/><path d="M36 12H850" stroke="#c2c2c2" stroke-width="2"/></svg>
      <div class="pins">
        <svg width="46" height="55" viewBox="0 0 46 55"><path d="M0 23A23 23 0 1 1 33 43L4 54.500Q0 56 0 52Z" fill="#383838"/><path d="M17 13 35 23 17 33Z" fill="#fff"/></svg>
        <svg width="46" height="55" viewBox="0 0 46 55"><path d="M46 23A23 23 0 1 0 13 43L42 54.500Q46 56 46 52Z" fill="#383838"/><path d="M11 11H37L33 20 37 30H14V37H11Z" fill="#fff"/><path d="M14 14H23V20H14ZM23 20H30L33 28H23Z" fill="#383838"/></svg>
      </div>
      <svg class="profile" viewBox="35 20 816 195">
        <path d="M35 129L${PROFILE.join(' ')} 853 72V215H35Z" fill="#2e3945"/>
        <path d="M35 35.500H850M35 144.500H850" stroke="#c6c6c6" stroke-dasharray="5 6.800" stroke-width="1.300"/>
        <g fill="none" stroke-width="7" stroke-linecap="round" stroke-linejoin="round">
          <polyline points="${PROFILE.join(' ')}" stroke="#84b82e"/>
          ${STEEP.map(([a, b, c]) => `<polyline points="${stretch(a, b)}" stroke="${c}"/>`).join('')}
        </g>
        <text x="47" y="65">1 260 m</text>
        <text x="47" y="174">1 010 m</text>
      </svg>
      <div class="cursor"><svg width="34" height="37" viewBox="0 0 34 37"><path d="M4 0H30Q34 0 34 4V20L19 37H15L0 20V4Q0 0 4 0Z" fill="#7ab62d"/><path d="M14 14H20Q22 16 20 19V36L17 38 14 36V19Q12 16 14 14Z" fill="#fff"/></svg></div>
    `;
  }
}
customElements.define('elevation-chart', ElevationChart);

class TabBar extends HTMLElement {
  connectedCallback() {
    this.attachShadow({ mode: 'open' }).innerHTML = `
      <style>
        :host { display: block; background: var(--bar); border-top: 1px solid var(--line); }
        nav { display: grid; grid-template-columns: repeat(5, minmax(0, 1fr)); padding-top: 4px; }
        .home { width: 36%; height: 12px; border-radius: 6px; margin: 54px auto 19px; background: #000; }
      </style>
      <nav><slot></slot></nav>
      <div class="home"></div>
    `;
  }
}
customElements.define('tab-bar', TabBar);

const TAB_ICONS = {
  home: '<path d="M-50-42V57H50V-12M-73 3 0-53 73 3M14 21V57" fill="none" stroke="#555" stroke-width="14"/>',
  route: '<g fill="none" stroke="#555" stroke-width="13"><circle cx="-50" r="14"/><circle cx="49" r="14"/><path d="M-50-14V-26A25 25 0 0 1 0-26V25A25 25 0 0 0 50 25V14"/></g>',
  record: '<g fill="none" stroke="#555" stroke-width="13"><circle r="57"/><circle r="29"/></g>',
  user: '<circle cy="-28" r="29" fill="#3f6e0c"/><path d="M-57 57V48C-57 22-28 7 0 7S57 22 57 48V57Z" fill="#3f6e0c"/>',
  tree: '<path d="M0-57 45 9H-45Z" fill="#858585"/><path d="M0-13 45 53H-45Z" fill="#515151"/>'
};

class TabItem extends HTMLElement {
  connectedCallback() {
    const badge = this.getAttribute('badge');
    this.attachShadow({ mode: 'open' }).innerHTML = `
      <style>
        :host { display: block; padding: 0 5px; }
        a {
          position: relative;
          display: flex;
          flex-direction: column;
          align-items: center;
          height: 107px;
          padding-top: 15px;
          box-sizing: border-box;
          border-radius: 14px;
          color: #707070;
          font-size: 26px;
          line-height: 32px;
          text-decoration: none;
        }
        svg { margin-bottom: 16px; }
        :host([active]) a { background: #dfe6d6; color: var(--green); }
        .badge {
          position: absolute;
          top: 3px;
          left: 60%;
          width: 42px;
          height: 42px;
          border-radius: 50%;
          background: #b3261e;
          color: #fff;
          font-size: 30px;
          line-height: 42px;
          text-align: center;
        }
      </style>
      <a href="#">
        <svg width="54" height="48" viewBox="-81 -72 162 144">${TAB_ICONS[this.getAttribute('icon')]}</svg>
        <slot></slot>
        ${badge ? `<span class="badge">${badge}</span>` : ''}
      </a>
    `;
  }
}
customElements.define('tab-item', TabItem);
</script>
</body>
</html>
